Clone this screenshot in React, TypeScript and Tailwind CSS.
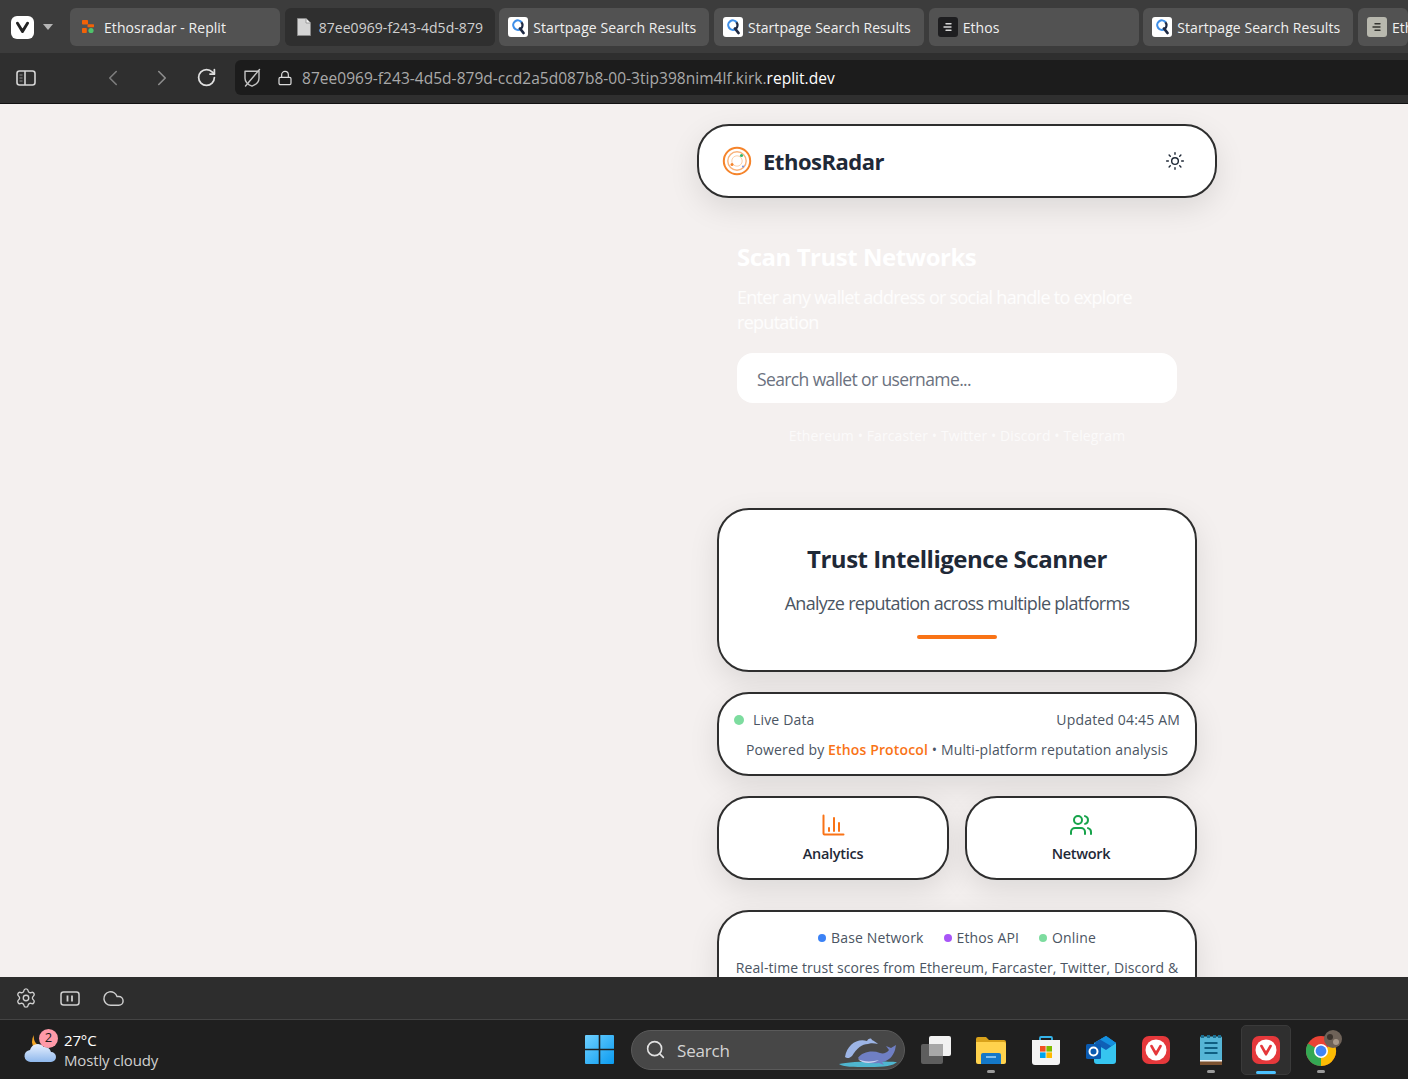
import { ChevronLeft, ChevronRight, RotateCw, Lock, Settings, Cloud, Search, Sun, Users } from "lucide-react";

const ff = "font-['Open_Sans',sans-serif]";

function VivaldiMark({ size = 28, bg = "#e5383b", fg = "#e5383b" }: { size?: number; bg?: string; fg?: string }) {
  return (
    <svg width={size} height={size} viewBox="0 0 28 28">
      <rect x="0" y="0" width="28" height="28" rx="7" fill={bg} />
      <circle cx="14" cy="14" r="10.5" fill="#fff" />
      <path d="M8.2 10.5 L13 19 Q14 20.5 15 19 L19.8 10.5 Q20.4 8.8 18.6 8.8 Q17.5 8.8 17 10 L14.6 14.3 Q14 15 13.4 14.3 L11 10 Q10.5 8.8 9.4 8.8 Q7.7 8.8 8.2 10.5Z" fill={fg} />
    </svg>
  );
}

function Startpage() {
  return (
    <svg width="20" height="20" viewBox="0 0 20 20" className="shrink-0">
      <rect width="20" height="20" rx="3" fill="#fff" />
      <path d="M13.6 5.2A4.7 4.7 0 1 0 12.6 12" fill="none" stroke="#3f8fe8" strokeWidth="2.2" />
      <path d="M13.4 5.2A4.7 4.7 0 0 1 12.6 12" fill="none" stroke="#1f2a44" strokeWidth="2.2" />
      <path d="M12 11.5 L15.5 16" stroke="#1f2a44" strokeWidth="2.8" strokeLinecap="round" />
    </svg>
  );
}

function EthosFav({ light }: { light?: boolean }) {
  return (
    <svg width="20" height="20" viewBox="0 0 20 20" className="shrink-0">
      <rect width="20" height="20" rx="3" fill={light ? "#b8b8ae" : "#1e1e20"} />
      <path d="M8 6.8h5M6 10h7M8 13.2h5" stroke={light ? "#33332f" : "#d8d8d8"} strokeWidth="1.4" strokeLinecap="round" />
    </svg>
  );
}

function ReplitFav() {
  return (
    <svg width="16" height="16" viewBox="0 0 16 16" className="shrink-0">
      <rect x="1" y="1" width="6" height="4.6" rx="0.8" fill="#f26207" />
      <rect x="6.5" y="5.2" width="6.5" height="3" rx="0.6" fill="#f26207" />
      <rect x="1" y="9" width="4.8" height="5" rx="0.8" fill="#f26207" />
      <circle cx="10" cy="11.5" r="2.6" fill="#4fc26b" />
    </svg>
  );
}

function DocFav() {
  return (
    <svg width="16" height="20" viewBox="0 0 16 20" className="shrink-0">
      <path d="M1.5 1.5h8.5l4.5 4.5v12.5h-13z" fill="#d4d4d4" stroke="#8a8a8a" strokeWidth="1" />
      <path d="M10 1.5v4.5h4.5" fill="#f2f2f2" stroke="#8a8a8a" strokeWidth="0.8" />
    </svg>
  );
}

function Tab({ icon, title, dark, width = "w-[210px]" }: { icon: React.ReactNode; title: string; dark?: boolean; width?: string }) {
  return (
    <div className={`flex h-[38px] shrink-0 items-center gap-[6px] rounded-[6px] pl-[10px] ${width} ${dark ? "bg-[#2f2f2f] text-[#cfcfcf]" : "bg-[#525252] text-[#f0f0f0]"}`}>
      <span className="flex w-[18px] shrink-0 justify-center">{icon}</span>
      <span className="whitespace-nowrap pt-[1px] text-[14px] tracking-[0.004em]">{title}</span>
    </div>
  );
}

function PanelIcon() {
  return (
    <svg width="20" height="16" viewBox="0 0 20 16" fill="none" stroke="#d6d6d6" strokeWidth="1.6">
      <rect x="1" y="1" width="18" height="14" rx="2.5" />
      <path d="M9 1v14" />
      <path d="M3.5 5h3M3.5 8h3M3.5 11h3" strokeWidth="1" stroke="#8c8c8c" />
    </svg>
  );
}

function ShieldSlash() {
  return (
    <svg width="20" height="20" viewBox="0 0 20 20" fill="none" stroke="#c4c4c4" strokeWidth="1.4" strokeLinecap="round" strokeLinejoin="round">
      <path d="M3 3.2h14v7c0 4-3 6.4-7 8-4-1.6-7-4-7-8z" />
      <path d="M17.5 1.5 3.5 18" />
    </svg>
  );
}

function BrowserChrome() {
  return (
    <div className="shrink-0">
      <div className="flex h-[53px] items-center bg-[#3c3c3c]">
        <div className="ml-[11px] mt-[1px] flex h-[23px] w-[23px] items-center justify-center rounded-[6px] bg-white">
          <svg width="15" height="13" viewBox="0 0 15 13">
            <path d="M1 2.5 L6.4 11.4 Q7.5 12.8 8.6 11.4 L14 2.5 Q14.4 0.8 12.6 0.8 Q11.6 0.8 11 2 L7.9 7 Q7.5 7.6 7.1 7 L4 2 Q3.4 0.8 2.4 0.8 Q0.6 0.8 1 2.5Z" fill="#222" />
          </svg>
        </div>
        <svg width="10" height="6" viewBox="0 0 10 6" className="ml-[9px]">
          <path d="M0 0h10L5 6z" fill="#b5b5b5" />
        </svg>
        <div className="ml-[17px] mt-[1px] flex w-[1338px] gap-[4.67px]">
          <Tab icon={<ReplitFav />} title="Ethosradar - Replit" />
          <Tab dark icon={<DocFav />} title="87ee0969-f243-4d5d-879" />
          <Tab icon={<Startpage />} title="Startpage Search Results" />
          <Tab icon={<Startpage />} title="Startpage Search Results" />
          <Tab icon={<EthosFav />} title="Ethos" />
          <Tab icon={<Startpage />} title="Startpage Search Results" />
          <Tab width="w-[50px]" icon={<EthosFav light />} title="Eth" />
        </div>
      </div>
      <div className="flex h-[51px] items-start border-b border-[#111] bg-[#2f2f2f] pt-[7px]">
        <div className="ml-[16px] mt-[10px]"><PanelIcon /></div>
        <ChevronLeft className="ml-[64px] mt-[5px] text-[#7d7d7d]" size={26} strokeWidth={1.5} />
        <ChevronRight className="ml-[23px] mt-[5px] text-[#8d8d8d]" size={26} strokeWidth={1.5} />
        <RotateCw className="ml-[21px] mt-[7px] text-[#e0e0e0]" size={21} strokeWidth={2} />
        <div className="ml-[18px] flex h-[35px] flex-1 items-center rounded-l-[6px] bg-[#1c1c1c] pl-[7px]">
          <ShieldSlash />
          <Lock className="ml-[15px] text-[#dcdcdc]" size={16} strokeWidth={1.8} />
          <div className="ml-[9px] whitespace-nowrap pt-[2px] text-[15.5px] tracking-[0.002em]">
            <span className="text-[#a9a9a9]">87ee0969-f243-4d5d-879d-ccd2a5d087b8-00-3tip398nim4lf.kirk.</span>
            <span className="text-white">replit.dev</span>
          </div>
        </div>
      </div>
    </div>
  );
}

function Logo() {
  return (
    <svg width="30" height="30" viewBox="0 0 30 30" fill="none">
      <circle cx="15" cy="15" r="13.2" stroke="#f5842b" strokeWidth="2" />
      <circle cx="15" cy="15" r="9.2" stroke="#f9b27a" strokeWidth="1.4" />
      <circle cx="15" cy="15" r="5.2" stroke="#fbd0ac" strokeWidth="1" />
      <circle cx="19.5" cy="9.5" r="1.6" fill="#35b56e" />
      <circle cx="10" cy="18.5" r="1.5" fill="#f5842b" />
      <circle cx="21" cy="20.5" r="1" fill="#6b8fe8" />
    </svg>
  );
}

function ChartIcon() {
  return (
    <svg width="24" height="24" viewBox="0 0 24 24" fill="none" stroke="#f97316" strokeWidth="2" strokeLinecap="round">
      <path d="M2.5 2.5v18a1 1 0 0 0 1 1h19" />
      <path d="M8 15v3M13 5v13M18 10v8" />
    </svg>
  );
}

const card = "rounded-[32px] border-2 border-[#2e2e2e] bg-white shadow-[0_10px_30px_rgba(0,0,0,0.1)]";

function Page() {
  return (
    <div className={`flex-1 overflow-hidden bg-[#f4f0ef] pl-[697px] pt-[20px] ${ff}`}>
      <div className="w-[520px]">
        <header className={`flex h-[74px] items-center justify-between pl-[23px] pr-[30px] ${card}`}>
          <div className="flex items-center gap-[11px]">
            <Logo />
            <span className="text-[22px] font-bold tracking-[-0.022em] text-[#1f2937]">EthosRadar</span>
          </div>
          <Sun size={20} strokeWidth={1.7} className="text-[#1f2937]" />
        </header>

        <section className="px-[40px] pt-[40px]">
          <h2 className="text-[24px] font-bold leading-[38px] tracking-[-0.02em] text-white">Scan Trust Networks</h2>
          <p className="mt-[9px] text-[18px] leading-[25px] tracking-[-0.04em] text-white/85">Enter any wallet address or social handle to explore reputation</p>
          <input
            readOnly
            placeholder="Search wallet or username..."
            className="mt-[18px] block h-[50px] w-[440px] rounded-[16px] bg-white px-[20px] pt-[1px] text-[17.5px] tracking-[-0.035em] outline-none placeholder:text-[#6b7280]"
          />
          <p className="mt-[23px] text-center text-[14px] leading-[20px] tracking-[0.007em] text-white/70">Ethereum • Farcaster • Twitter • Discord • Telegram</p>
        </section>

        <div className="mt-[62px] flex flex-col px-[20px]">
          <div className={`flex h-[164px] flex-col items-center pt-[30px] ${card}`}>
            <h1 className="text-[24px] font-bold leading-[38px] tracking-[-0.02em] text-[#1f2937]">Trust Intelligence Scanner</h1>
            <p className="mt-[12px] text-[18px] leading-[26px] tracking-[-0.04em] text-[#4b5563]">Analyze reputation across multiple platforms</p>
            <div className="mt-[19px] h-[4px] w-[80px] rounded-full bg-[#f97316]" />
          </div>

          <div className={`mt-[20px] h-[84px] px-[15px] pt-[16px] ${card}`}>
            <div className="flex items-center justify-between text-[14px] leading-[20px] tracking-[0.012em] text-[#4b5563]">
              <span className="flex items-center gap-[9px]">
                <span className="h-[10px] w-[10px] rounded-full bg-[#7ddc9f]" />
                Live Data
              </span>
              <span>Updated 04:45 AM</span>
            </div>
            <p className="mt-[10px] text-center text-[14px] leading-[20px] tracking-[0.01em] text-[#4b5563]">
              Powered by <span className="font-semibold text-[#f97316]">Ethos Protocol</span> • Multi-platform reputation analysis
            </p>
          </div>

          <div className="mt-[20px] grid grid-cols-2 gap-[16px]">
            <div className={`flex h-[84px] flex-col items-center pt-[15px] ${card}`}>
              <ChartIcon />
              <span className="mt-[7px] text-[14.5px] font-semibold leading-[20px] tracking-[-0.02em] text-[#1f2937]">Analytics</span>
            </div>
            <div className={`flex h-[84px] flex-col items-center pt-[15px] ${card}`}>
              <Users size={24} strokeWidth={2} className="text-[#16a34a]" />
              <span className="mt-[7px] text-[14.5px] font-semibold leading-[20px] tracking-[-0.02em] text-[#1f2937]">Network</span>
            </div>
          </div>

          <div className={`mt-[30px] h-[120px] px-[14px] pt-[16px] ${card}`}>
            <div className="flex justify-center gap-[20px] text-[14px] leading-[20px] tracking-[0.01em] text-[#4b5563]">
              <span className="flex items-center gap-[5px]"><span className="h-[8px] w-[8px] rounded-full bg-[#3b82f6]" />Base Network</span>
              <span className="flex items-center gap-[5px]"><span className="h-[8px] w-[8px] rounded-full bg-[#a855f7]" />Ethos API</span>
              <span className="flex items-center gap-[5px]"><span className="h-[8px] w-[8px] rounded-full bg-[#7ddc9f]" />Online</span>
            </div>
            <p className="mt-[10px] text-center text-[14px] leading-[20px] tracking-[0.006em] text-[#4b5563]">Real-time trust scores from Ethereum, Farcaster, Twitter, Discord &amp;</p>
          </div>
        </div>
      </div>
    </div>
  );
}

function StatusBar() {
  return (
    <div className="flex h-[43px] shrink-0 items-center border-b border-[#444] bg-[#2d2d2d] pl-[15px]">
      <Settings size={22} strokeWidth={1.5} className="text-[#cfcfcf]" />
      <svg width="20" height="15" viewBox="0 0 20 15" fill="none" stroke="#cfcfcf" strokeWidth="1.5" className="ml-[23px]">
        <rect x="1" y="1" width="18" height="13" rx="2.5" />
        <path d="M7.5 4.5v6M12 4.5v6" strokeWidth="1.8" />
      </svg>
      <Cloud size={23} strokeWidth={1.5} className="ml-[22px] text-[#cfcfcf]" />
    </div>
  );
}

function Weather() {
  return (
    <div className="relative ml-[24px] flex items-center pl-[40px]">
      <svg width="34" height="34" viewBox="0 0 34 34" className="absolute left-0 top-[1px]">
        <path d="M10 4a11 11 0 0 0 1 14 11 11 0 0 0 8-2A10 10 0 0 1 10 4z" fill="#f5a623" />
        <defs>
          <linearGradient id="cl" x1="0" y1="0" x2="0" y2="1">
            <stop offset="0" stopColor="#e8f1ff" />
            <stop offset="1" stopColor="#8fb8ec" />
          </linearGradient>
        </defs>
        <path d="M7 31a6 6 0 0 1-1-12 8 8 0 0 1 14-3 7 7 0 0 1 7 5 5 5 0 0 1 0 10z" fill="url(#cl)" />
      </svg>
      <span className="absolute left-[15px] top-[-1px] flex h-[19px] w-[19px] items-center justify-center rounded-full bg-[#ff9aa8] text-[13px] text-[#1a1a1a]">2</span>
      <div className="flex flex-col text-[15px] leading-[20px] tracking-[-0.01em]">
        <span className="text-white">27°C</span>
        <span className="text-[#d0d0d0]">Mostly cloudy</span>
      </div>
    </div>
  );
}

function TaskItem({ children, mark, active }: { children: React.ReactNode; mark?: "gray" | "blue"; active?: boolean }) {
  return (
    <div className="relative flex h-[50px] w-[55px] shrink-0 items-center justify-center">
      {active && <div className="absolute left-[2.5px] top-0 h-[50px] w-[50px] rounded-[5px] border border-[#3a3a3a] bg-[#2f2f2f]" />}
      <div className="relative flex items-center justify-center">{children}</div>
      {mark === "gray" && <div className="absolute bottom-[2px] left-[23.5px] h-[3px] w-[8px] rounded-full bg-[#9a9a9a]" />}
      {mark === "blue" && <div className="absolute bottom-[1px] left-[17.5px] h-[3px] w-[20px] rounded-full bg-[#4cc2ff]" />}
    </div>
  );
}

function Taskbar() {
  return (
    <div className={`flex h-[59px] shrink-0 items-center bg-[#1f1f1f] ${ff}`}>
      <div className="w-[585px] shrink-0"><Weather /></div>
      <svg width="29" height="29" viewBox="0 0 29 29" className="shrink-0">
        <defs>
          <linearGradient id="win" x1="0" y1="0" x2="1" y2="1">
            <stop offset="0" stopColor="#6fd0ff" />
            <stop offset="1" stopColor="#0a9bf0" />
          </linearGradient>
        </defs>
        <path d="M0 1a1 1 0 0 1 1-1h12.7v13.7H0zM15.3 0H28a1 1 0 0 1 1 1v12.7H15.3zM0 15.3h13.7V29H1a1 1 0 0 1-1-1zM15.3 15.3H29V28a1 1 0 0 1-1 1H15.3z" fill="url(#win)" />
      </svg>
      <div className="relative ml-[17px] flex h-[40px] w-[274px] shrink-0 items-center rounded-full border border-[#5a5a5a] bg-[#474747] pl-[13px]">
        <Search size={21} strokeWidth={1.8} className="text-[#e2e2e2]" />
        <span className="ml-[11px] pt-[2px] text-[17px] tracking-[-0.01em] text-[#d4d4d4]">Search</span>
        <svg width="62" height="32" viewBox="0 0 62 32" className="absolute right-[5px] top-[4px]">
          <path d="M2 29c10-3 46-3 58-2-4 4-12 5-28 5S6 32 2 29z" fill="#4fb6d0" />
          <path d="M8 22C10 10 20 3 30 6c2-3 4-3 5-1 2 1 4 2 6 4-4-1-8-1-10 0-6 0-11 4-16 12-2 2-5 3-7 1z" fill="#9db5e6" />
          <path d="M21 23c4-6 14-8 22-5 3 1 7 0 9-3l-3-4 5 2 5-3-1 5c-2 6-6 11-13 12l2 3-5-2c-8 1-18 0-21-5z" fill="#6f7fc4" />
          <path d="M21 24c5 3 14 3 21 1-6 4-17 4-21-1z" fill="#c9d3f0" />
        </svg>
      </div>
      <div className="ml-[3.5px] flex">
        <TaskItem>
          <svg width="30" height="28" viewBox="0 0 30 28">
            <rect x="0" y="8" width="22" height="20" rx="2" fill="#5e5e5e" />
            <rect x="8" y="0" width="22" height="20" rx="2" fill="#f2f2f2" />
            <path d="M8 8h14v12H8z" fill="#a8a8a8" />
          </svg>
        </TaskItem>
        <TaskItem mark="gray">
          <svg width="30" height="28" viewBox="0 0 30 28">
            <path d="M0 3a2 2 0 0 1 2-2h8l3 3h15a2 2 0 0 1 2 2v4H0z" fill="#d9a21b" />
            <path d="M0 6h28a2 2 0 0 1 2 2v18a2 2 0 0 1-2 2H2a2 2 0 0 1-2-2z" fill="#ffd24d" />
            <path d="M5 19a2 2 0 0 1 2-2h16a2 2 0 0 1 2 2v9H5z" fill="#1478c8" />
            <path d="M10 21h10" stroke="#9fd3f7" strokeWidth="1.6" />
          </svg>
        </TaskItem>
        <TaskItem>
          <svg width="30" height="30" viewBox="0 0 30 30">
            <path d="M9 6V3a1 1 0 0 1 1-1h10a1 1 0 0 1 1 1v3" fill="none" stroke="#35b4ea" strokeWidth="1.8" />
            <path d="M1 5h28v22a3 3 0 0 1-3 3H4a3 3 0 0 1-3-3z" fill="#f4f4f4" />
            <rect x="9" y="11" width="5.6" height="5.6" fill="#f25022" />
            <rect x="15.4" y="11" width="5.6" height="5.6" fill="#7fba00" />
            <rect x="9" y="17.4" width="5.6" height="5.6" fill="#00a4ef" />
            <rect x="15.4" y="17.4" width="5.6" height="5.6" fill="#ffb900" />
          </svg>
        </TaskItem>
        <TaskItem>
          <svg width="30" height="28" viewBox="0 0 30 28">
            <path d="M8 7 20 0l10 7v18a3 3 0 0 1-3 3H11a3 3 0 0 1-3-3z" fill="#36c5f0" />
            <path d="M8 7 20 0l10 7-10 7z" fill="#0f5fb5" />
            <path d="M14 3.5 20 0l10 7-5 3z" fill="#1490df" />
            <rect x="0" y="8" width="15" height="15" rx="1.5" fill="#0a5ab0" />
            <circle cx="7.5" cy="15.5" r="4" fill="none" stroke="#fff" strokeWidth="2" />
          </svg>
        </TaskItem>
        <TaskItem><VivaldiMark size={28} /></TaskItem>
        <TaskItem mark="gray">
          <svg width="22" height="30" viewBox="0 0 22 30">
            <rect x="0" y="1.5" width="22" height="28.5" rx="1" fill="#55b5d6" />
            <rect x="0" y="26" width="22" height="4" fill="#7c5230" />
            <rect x="0" y="25" width="22" height="1.5" fill="#f2f2f2" />
            <path d="M1 0h3v3H1zM7 0h3v3H7zM13 0h3v3h-3zM18 0h3v3h-3z" fill="#1b6f92" />
            <path d="M4.5 8h13M4.5 13h13M4.5 18h13" stroke="#0f5f82" strokeWidth="1.8" />
          </svg>
        </TaskItem>
        <TaskItem active mark="blue"><VivaldiMark size={28} /></TaskItem>
        <TaskItem mark="gray">
          <svg width="36" height="36" viewBox="0 0 36 36" className="relative left-[3px] -top-[2px]">
            <circle cx="15" cy="21" r="15" fill="#ea4335" />
            <path d="M15 21 L28 13.5 A15 15 0 0 1 15 36 Z" fill="#fbbc04" />
            <path d="M15 21 L15 36 A15 15 0 0 1 2 13.5 Z" fill="#34a853" />
            <circle cx="15" cy="21" r="7" fill="#fff" />
            <circle cx="15" cy="21" r="5.4" fill="#4285f4" />
            <circle cx="27" cy="9" r="9" fill="#6e6258" />
            <circle cx="24" cy="7" r="3" fill="#3a322c" />
            <circle cx="30" cy="12" r="3" fill="#a8998a" />
          </svg>
        </TaskItem>
      </div>
    </div>
  );
}

export default function App() {
  return (
    <div className={`flex h-[1079px] w-[1408px] flex-col overflow-hidden ${ff}`}>
      <BrowserChrome />
      <Page />
      <StatusBar />
      <Taskbar />
    </div>
  );
}
